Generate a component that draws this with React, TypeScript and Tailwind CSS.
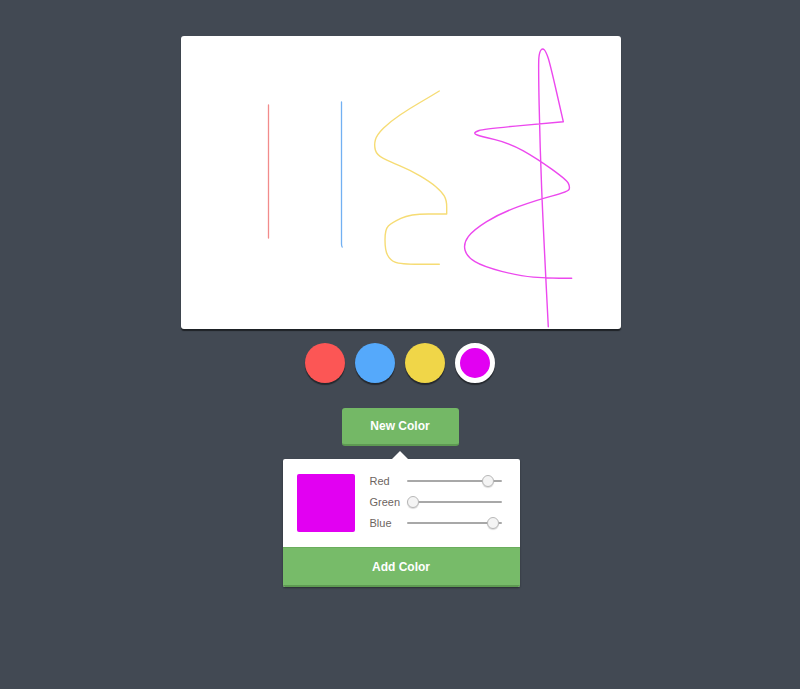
import React from "react";

const yellow: [number, number][] = [
  [439.3, 91], [430, 96.7], [410, 108.3], [390, 121.7], [376.7, 135], [374, 145], [376.7, 155],
  [390, 161.7], [410, 170], [430, 181.7], [441.7, 191.7], [446.7, 200], [446.7, 214], [446.7, 214], [410, 214],
  [391.7, 222.7], [385, 229.3], [385, 250], [390, 260], [400, 264.3], [439.3, 264.3],
];

const magenta: [number, number][] = [
  [548.3, 326.7], [543.3, 230], [540, 146.7], [538.3, 63.3], [539.5, 51.7], [542.7, 48], [546, 51.7],
  [550, 63.3], [563.3, 121.7], [563.3, 121.7], [483.3, 129], [475, 132], [474.5, 134], [480, 136], [510, 143.3], [536.7, 158.3],
  [566.7, 180], [570, 186.7], [568.3, 191.7], [536.7, 200], [500, 213.3], [473.3, 230], [463.3, 243.3],
  [466.7, 256.7], [483.3, 266.7], [520, 276], [546.7, 278.3], [571.7, 278.3],
];

function smooth(pts: [number, number][]) {
  let d = `M${pts[0][0]} ${pts[0][1]}`;
  for (let i = 1; i < pts.length - 1; i++) {
    const mx = (pts[i][0] + pts[i + 1][0]) / 2;
    const my = (pts[i][1] + pts[i + 1][1]) / 2;
    d += ` Q${pts[i][0]} ${pts[i][1]} ${mx} ${my}`;
  }
  const l = pts[pts.length - 1];
  d += ` L${l[0]} ${l[1]}`;
  return d;
}

function Slider({ value }: { value: number }) {
  return (
    <div className="relative h-[12px] w-[95px]">
      <div className="absolute left-0 right-0 top-[5px] h-[2px] rounded-full bg-[#a8a8a8]" />
      <div
        className="absolute top-0 h-[12px] w-[12px] rounded-full border border-[#b8b8b8] bg-[#f4f4f4] shadow-[0_1px_1px_rgba(0,0,0,0.15)]"
        style={{ left: `${value * 83}px` }}
      />
    </div>
  );
}

export default function App() {
  const font = { fontFamily: '"Helvetica Neue", "Liberation Sans", Arial, sans-serif' };
  return (
    <div className="min-h-[689px] w-full bg-[#424953] flex flex-col items-center pt-[36px]" style={font}>
      <div className="relative ml-[2px] h-[293px] w-[440px] rounded-[3px] bg-white shadow-[0_2px_1px_rgba(0,0,0,0.55)]">
        <svg className="absolute inset-0 h-full w-full" viewBox="181 36 440 293">
          <path d="M268.5 105 L268.5 238" stroke="#f28b8b" strokeWidth="1.3" fill="none" strokeLinecap="round" />
          <path d="M341.5 102 L341.5 244 Q341.6 246.5 342.2 247" stroke="#72b0f2" strokeWidth="1.3" fill="none" strokeLinecap="round" />
          <path d={smooth(yellow)} stroke="#f6dc74" strokeWidth="1.4" fill="none" strokeLinecap="round" strokeLinejoin="round" />
          <path d={smooth(magenta)} stroke="#ec48ee" strokeWidth="1.4" fill="none" strokeLinecap="round" strokeLinejoin="round" />
        </svg>
      </div>

      <div className="mt-[14px] flex gap-[10px]">
        <div className="h-[40px] w-[40px] rounded-full bg-[#fc5655] shadow-[0_2px_1px_rgba(0,0,0,0.45)]" />
        <div className="h-[40px] w-[40px] rounded-full bg-[#55a9fb] shadow-[0_2px_1px_rgba(0,0,0,0.45)]" />
        <div className="h-[40px] w-[40px] rounded-full bg-[#f0d648] shadow-[0_2px_1px_rgba(0,0,0,0.45)]" />
        <div className="h-[40px] w-[40px] rounded-full border-[5px] border-white bg-[#e200f2] shadow-[0_2px_1px_rgba(0,0,0,0.45)]" />
      </div>

      <button className="mt-[25px] h-[38px] w-[117px] rounded-[3px] border-b-2 border-[#5e9a52] bg-[#74b866] text-[12px] font-bold text-white">
        New Color
      </button>

      <div className="relative ml-[2px] mt-[13px] w-[237px] rounded-[2px] bg-white shadow-[0_1px_2px_rgba(0,0,0,0.4)]">
        <div className="absolute left-[109px] top-[-8px] h-0 w-0 border-x-[8px] border-b-[8px] border-x-transparent border-b-white" />
        <div className="flex h-[88px] items-start pl-[14px] pt-[15px]">
          <div className="h-[58px] w-[58px] rounded-[2px] bg-[#e200f2]" />
          <div className="ml-[15px] mt-[1px] flex flex-col gap-[9px]">
            {[
              ["Red", 0.91],
              ["Green", 0],
              ["Blue", 0.97],
            ].map(([label, v]) => (
              <div key={label as string} className="flex h-[12px] items-center">
                <span className="w-[37px] text-[11px] leading-[12px] text-[#6d655f]">{label}</span>
                <Slider value={v as number} />
              </div>
            ))}
          </div>
        </div>
        <button className="flex h-[40px] w-full items-center justify-center rounded-b-[2px] border-t border-b-2 border-t-[#6aad5c] border-b-[#5e9a52] bg-[#77bb69] text-[12px] font-bold text-white">
          Add Color
        </button>
      </div>
    </div>
  );
}
